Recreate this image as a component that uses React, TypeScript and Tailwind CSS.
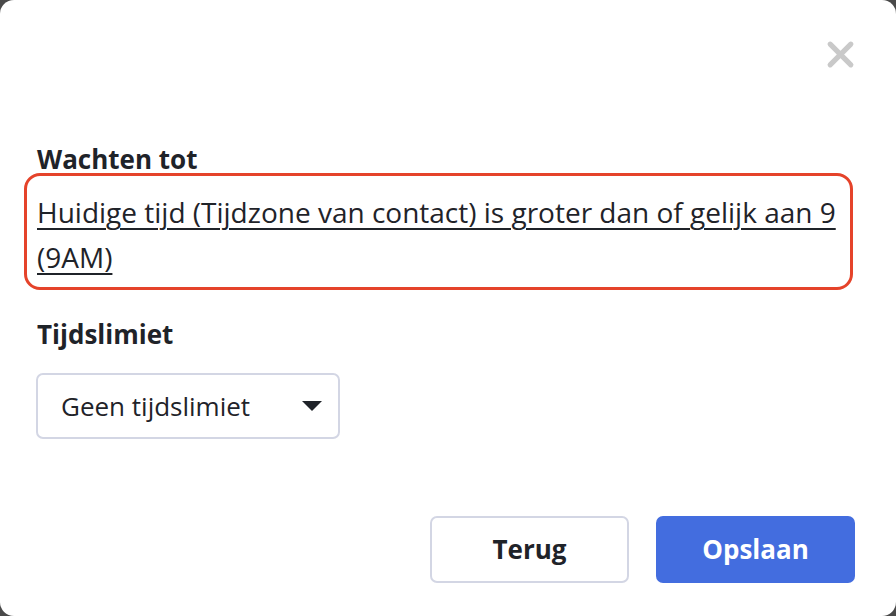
export default function App() {
  return (
    <div className="h-[616px] w-[896px] overflow-hidden bg-[#4a4a4a] font-['Open_Sans',sans-serif] text-[#1f2329]">
      <div className="flex h-full flex-col rounded-[14px] bg-white pl-[37px] pr-[41px]">
        <div className="flex justify-end pt-[39px]">
          <button type="button" aria-label="Sluiten" className="mr-[-1px] grid h-[31px] w-[31px] place-items-center">
            <svg viewBox="0 0 30 30" className="h-[31px] w-[31px]" aria-hidden="true">
              <path d="M5 5 L25 25 M25 5 L5 25" stroke="#c9c9c9" strokeWidth="5" strokeLinecap="round" />
            </svg>
          </button>
        </div>

        <h2 className="mt-[75px] text-[26px] font-bold leading-[28px]">Wachten tot</h2>

        <div className="-ml-[13px] mr-[2px] rounded-[16px] border-[3px] border-[#e5432a] pl-[10px] pr-[10px] pt-[14px] pb-[7px]">
          <a href="#" className="text-[28px] leading-[45px] underline underline-offset-[5px] decoration-[2px]">
            Huidige tijd (Tijdzone van contact) is groter dan of gelijk aan 9 (9AM)
          </a>
        </div>

        <h3 className="mt-[31px] text-[26px] font-bold leading-[27px]">Tijdslimiet</h3>

        <div className="mt-[25px] flex h-[66px] w-[304px] -ml-px items-center justify-between rounded-[7px] border-2 border-[#d3d6e4] pl-[23px] pr-[16px]">
          <span className="text-[26px]">Geen tijdslimiet</span>
          <svg viewBox="0 0 20 10" className="h-[10px] w-[20px]" aria-hidden="true">
            <path d="M0 0 H20 L10 10 Z" fill="#1f2329" />
          </svg>
        </div>

        <div className="mt-[77px] flex justify-end gap-[27px]">
          <button type="button" className="h-[67px] w-[199px] rounded-[7px] border-2 border-[#d3d6e4] bg-white text-[26px] font-bold">
            Terug
          </button>
          <button type="button" className="h-[67px] w-[199px] rounded-[7px] bg-[#436ddf] text-[26px] font-bold text-white">
            Opslaan
          </button>
        </div>
      </div>
    </div>
  );
}
